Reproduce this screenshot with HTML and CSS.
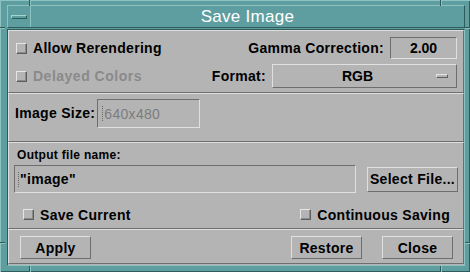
FILE: index.html
```html
<!DOCTYPE html>
<html lang="en">
<head>
    <meta charset="UTF-8" />
    <title>Save Image</title>
    <link rel="stylesheet" href="styles.css">
</head>
<body>
<div class="window">
    <div class="titlebar">
        <div class="menu-btn"><span class="menu-bar"></span></div>
        <div class="title">Save Image</div>
    </div>

    <div class="client">
        <div class="section options">
            <div class="row">
                <label class="check"><span class="box"></span>Allow Rerendering</label>
                <div class="pair">
                    <span class="label">Gamma Correction:</span>
                    <div class="field gamma">2.00</div>
                </div>
            </div>
            <div class="row">
                <label class="check disabled"><span class="box"></span>Delayed Colors</label>
                <div class="pair">
                    <span class="label">Format:</span>
                    <div class="optmenu"><span class="opt-text">RGB</span><span class="indicator"></span></div>
                </div>
            </div>
        </div>

        <div class="section size">
            <span class="label">Image Size:</span>
            <div class="field size-field"><span class="cursor"></span><span class="dim">640x480</span></div>
        </div>

        <div class="section output">
            <div class="small-label">Output file name:</div>
            <div class="file-row">
                <div class="field file-field"><span class="cursor"></span>"image"</div>
                <button class="btn select">Select File...</button>
            </div>
            <div class="check-row">
                <label class="check"><span class="box"></span>Save Current</label>
                <label class="check"><span class="box"></span>Continuous Saving</label>
            </div>
        </div>

        <div class="section actions">
            <button class="btn">Apply</button>
            <button class="btn restore">Restore</button>
            <button class="btn">Close</button>
        </div>
    </div>

    <!-- resize handle grooves on the frame -->
    <span class="mark v" style="left:29px; top:0"></span>
    <span class="mark v" style="left:440px; top:0"></span>
    <span class="mark v" style="left:29px; top:266px"></span>
    <span class="mark v" style="left:440px; top:266px"></span>
    <span class="mark h" style="left:0; top:27px"></span>
    <span class="mark h" style="left:465px; top:27px"></span>
    <span class="mark h" style="left:0; top:242px"></span>
    <span class="mark h" style="left:465px; top:242px"></span>
</div>
</body>
</html>
```

FILE: styles.css
```css
body {
    margin: 0;
    overflow: hidden;
    background: #5f9ea0;
    font-family: "Liberation Sans", Arial, sans-serif;
}

/* Window frame */
.window {
    position: relative;
    width: 470px;
    height: 272px;
    box-sizing: border-box;
    padding: 5px 5px 6px 7px;
    background: #5f9ea0;
    display: flex;
    flex-direction: column;
    gap: 1px;
    box-shadow: inset 1px 1px 0 #8cc3c0, inset -1px -1px 0 #2e5c5a;
}

.titlebar {
    height: 23px;
    box-sizing: border-box;
    display: flex;
    border: 1px solid;
    border-color: #8cc3c0 #2e5c5a #2e5c5a #8cc3c0;
}

.menu-btn {
    width: 22px;
    border-right: 1px solid #8cc3c0;
    display: flex;
    align-items: center;
    justify-content: center;
}

.menu-bar {
    width: 14px;
    height: 2px;
    border: 1px solid;
    border-color: #a6d4d1 #2e5c5a #2e5c5a #a6d4d1;
}

.title {
    flex: 1;
    text-align: center;
    color: #ffffff;
    font-size: 17px;
    line-height: 21px;
    letter-spacing: 0.3px;
}

.mark {
    position: absolute;
    box-sizing: border-box;
}

.mark.v {
    width: 2px;
    height: 6px;
    border-left: 1px solid #2e5c5a;
    border-right: 1px solid #8cc3c0;
}

.mark.h {
    width: 5px;
    height: 2px;
    border-top: 1px solid #2e5c5a;
    border-bottom: 1px solid #8cc3c0;
}

/* Client area */
.client {
    flex: 1;
    display: flex;
    flex-direction: column;
    background: #b4b4b4;
    border: 1px solid;
    border-color: #2e5c5a #8cc3c0 #8cc3c0 #2e5c5a;
}

.section {
    box-sizing: border-box;
    border: 1px solid;
    border-color: #dedede #6e6e6e #6e6e6e #dedede;
}

.label,
.check,
.btn {
    font-size: 14px;
    font-weight: bold;
    color: #000;
    letter-spacing: 0.3px;
}

/* Options */
.options {
    height: 63px;
    padding: 6px 6px 4px 7px;
    display: flex;
    flex-direction: column;
    gap: 5px;
}

.row {
    display: flex;
    align-items: center;
    justify-content: space-between;
}

.row:first-child {
    height: 22px;
}

.row:last-child {
    height: 24px;
}

.pair {
    display: flex;
    align-items: center;
    gap: 6px;
}

.check {
    display: flex;
    align-items: center;
}

.box {
    width: 9px;
    height: 9px;
    margin-right: 6px;
    border: 1px solid;
    border-color: #e6e6e6 #5e5e5e #5e5e5e #e6e6e6;
    box-shadow: inset -1px -1px 0 #8a8a8a;
}

.check.disabled {
    color: #8a8a8a;
    letter-spacing: 0.5px;
}

.field {
    box-sizing: border-box;
    border: 1px solid;
    border-color: #6e6e6e #e0e0e0 #e0e0e0 #6e6e6e;
    font-size: 14px;
    display: flex;
    align-items: center;
}

.gamma {
    width: 67px;
    height: 22px;
    justify-content: center;
    font-weight: bold;
}

.optmenu {
    width: 185px;
    height: 24px;
    box-sizing: border-box;
    border: 1px solid;
    border-color: #e0e0e0 #6e6e6e #6e6e6e #e0e0e0;
    display: flex;
    align-items: center;
    padding-right: 8px;
    font-size: 14px;
    font-weight: bold;
}

.opt-text {
    flex: 1;
    text-align: center;
    padding-left: 6px;
}

.indicator {
    width: 10px;
    height: 2px;
    border: 1px solid;
    border-color: #e6e6e6 #5e5e5e #5e5e5e #e6e6e6;
}

/* Image size */
.size {
    height: 49px;
    padding: 5px 0 0 6px;
    display: flex;
    align-items: flex-start;
    gap: 2px;
}

.size .label {
    line-height: 29px;
}

.size-field {
    width: 103px;
    height: 29px;
    padding-left: 4px;
}

.cursor {
    width: 1px;
    height: 15px;
    margin-right: 0;
    border-left: 1px dotted #6a6a6a;
}

.dim {
    color: #7c7c7c;
    letter-spacing: 0.3px;
}

/* Output file */
.output {
    height: 87px;
    padding: 5px 5px 0 5px;
}

.small-label {
    font-size: 12px;
    font-weight: bold;
    line-height: 14px;
    padding-left: 3px;
    letter-spacing: 0.3px;
}

.file-row {
    margin-top: 3px;
    display: flex;
    align-items: center;
    gap: 11px;
}

.file-field {
    width: 342px;
    height: 28px;
    padding-left: 3px;
    font-weight: bold;
    letter-spacing: 0.3px;
}

.check-row {
    margin-top: 12px;
    height: 19px;
    padding: 0 8px 0 9px;
    display: flex;
    align-items: center;
    justify-content: space-between;
}

/* Buttons */
.btn {
    font-family: "Liberation Sans", Arial, sans-serif;
    background: #b4b4b4;
    border: 1px solid;
    border-color: #e0e0e0 #6e6e6e #6e6e6e #e0e0e0;
    padding: 0;
    width: 71px;
    height: 23px;
}

.select {
    width: 91px;
    height: 25px;
}

.actions {
    height: 35px;
    padding: 6px 10px 0 11px;
    display: flex;
    align-items: flex-start;
    gap: 20px;
}

.restore {
    margin-left: auto;
}
```
